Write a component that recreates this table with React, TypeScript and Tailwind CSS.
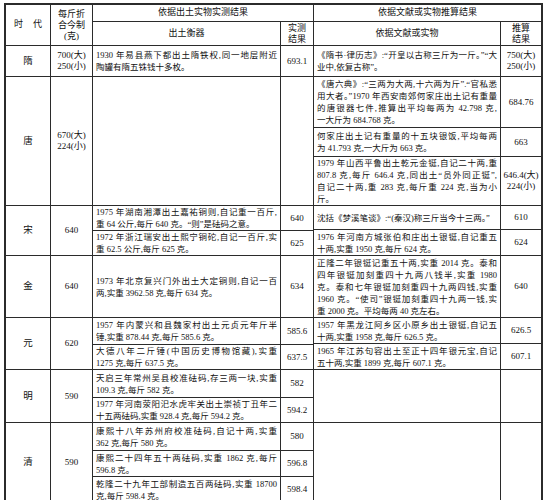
import React from "react";

type Sub = { h?: number; lines: string[]; value: string[] };
type Era = {
  name: string;
  base: string[];
  h: number;
  left: Sub[];
  right: Sub[];
};

const eras: Era[] = [
  {
    name: "隋",
    base: ["700(大)", "250(小)"],
    h: 31,
    left: [
      {
        lines: ["1930 年易县燕下都出土隋铁权,同一地层附近", "陶罐有隋五铢钱十多枚。"],
        value: ["693.1"],
      },
    ],
    right: [
      {
        lines: ["《隋书·律历志》:“开皇以古称三斤为一斤。”“大", "业中,依复古称”。"],
        value: ["750(大)", "250(小)"],
      },
    ],
  },
  {
    name: "唐",
    base: ["670(大)", "224(小)"],
    h: 129,
    left: [{ lines: [], value: [] }],
    right: [
      {
        h: 50,
        lines: [
          "《唐六典》:“三两为大两,十六两为斤”.“官私悉",
          "用大者。”1970 年西安南郊何家庄出土记有重量",
          "的唐银器七件,推算出平均每两为 42.798 克,",
          "一大斤为 684.768 克。",
        ],
        value: ["684.76"],
      },
      {
        h: 29,
        lines: ["何家庄出土记有重量的十五块银饭,平均每两", "为 41.793 克,一大斤为 663 克。"],
        value: ["663"],
      },
      {
        lines: [
          "1979 年山西平鲁出土乾元金铤,自记二十两,重",
          "807.8 克,每斤 646.4 克,同出土“员外同正铤”,",
          "自记二十两,重 283 克,每斤重 224 克,当为小",
          "斤。",
        ],
        value: ["646.4(大)", "224(小)"],
      },
    ],
  },
  {
    name: "宋",
    base: ["640"],
    h: 50,
    left: [
      {
        h: 28,
        lines: ["1975 年湖南湘潭出土嘉祐铜则,自记重一百斤,", "重 64 公斤,每斤 640 克。“则”是砝码之意。"],
        value: ["640"],
      },
      {
        lines: ["1972 年浙江瑞安出土熙宁铜砣,自记一百斤,实", "重 62.5 公斤,每斤 625 克。"],
        value: ["625"],
      },
    ],
    right: [
      {
        h: 23,
        lines: ["沈括《梦溪笔谈》:“(秦汉)称三斤当今十三两。”"],
        value: ["610"],
      },
      {
        lines: ["1976 年河南方城张伯和庄出土银铤,自记重五", "十两,实重 1950 克,每斤 624 克。"],
        value: ["624"],
      },
    ],
  },
  {
    name: "金",
    base: ["640"],
    h: 62,
    left: [
      {
        lines: ["1973 年北京复兴门外出土大定铜则,自记一百", "两,实重 3962.58 克,每斤 634 克。"],
        value: ["634"],
      },
    ],
    right: [
      {
        lines: [
          "正隆二年银铤记重五十两,实重 2014 克。泰和",
          "四年银铤加刻重四十九两八钱半,实重 1980",
          "克。泰和七年银铤加刻重四十九两四钱,实重",
          "1960 克。“使司”银铤加刻重四十九两一钱,实",
          "重 2000 克。平均每两 40 克左右。",
        ],
        value: ["640"],
      },
    ],
  },
  {
    name: "元",
    base: ["620"],
    h: 52,
    left: [
      {
        h: 28,
        lines: ["1957 年内蒙兴和县魏家村出土元贞元年斤半", "锤,实重 878.44 克,每斤 585.6 克。"],
        value: ["585.6"],
      },
      {
        lines: ["大德八年二斤锤(中国历史博物馆藏),实重", "1275 克,每斤 637.5 克。"],
        value: ["637.5"],
      },
    ],
    right: [
      {
        h: 25,
        lines: ["1957 年黑龙江阿乡区小原乡出土银铤,自记五", "十两,实重 1958 克,每斤 626.5 克。"],
        value: ["626.5"],
      },
      {
        lines: ["1965 年江苏句容出土至正十四年银元宝,自记", "五十两,实重 1899 克,每斤 607.1 克。"],
        value: ["607.1"],
      },
    ],
  },
  {
    name: "明",
    base: ["590"],
    h: 53,
    left: [
      {
        h: 28,
        lines: ["天启三年常州吴县校准砝码,存三两一块,实重", "109.3 克,每斤 582 克。"],
        value: ["582"],
      },
      {
        lines: ["1977 年河南荥阳汜水虎牢关出土崇祯丁丑年二", "十五两砝码,实重 928.4 克,每斤 594.2 克。"],
        value: ["594.2"],
      },
    ],
    right: [{ lines: [], value: [] }],
  },
  {
    name: "清",
    base: ["590"],
    h: 80,
    left: [
      {
        h: 27,
        lines: ["康熙十八年苏州府校准砝码,自记十两,实重", "362 克,每斤 580 克。"],
        value: ["580"],
      },
      {
        h: 26,
        lines: ["康熙二十四年五十两砝码,实重 1862 克,每斤", "596.8 克。"],
        value: ["596.8"],
      },
      {
        lines: ["乾隆二十九年工部制造五百两砝码,实重 18700", "克,每斤 598.4 克。"],
        value: ["598.4"],
      },
    ],
    right: [{ lines: [], value: [] }],
  },
];

const Lines = ({ lines }: { lines: string[] }) => (
  <div className="px-[3px] text-[8.5px]">
    {lines.map((line, i) => (
      <div
        key={i}
        className={
          i < lines.length - 1
            ? "whitespace-nowrap leading-[12px] text-justify [text-align-last:justify]"
            : "whitespace-nowrap leading-[12px]"
        }
      >
        {line}
      </div>
    ))}
  </div>
);

const Value = ({ value }: { value: string[] }) => (
  <div className="flex flex-1 flex-col items-center justify-center border-l border-[#2b2b2b] text-[9px] leading-[11px]">
    {value.map((v) => (
      <span key={v} className="whitespace-nowrap">
        {v}
      </span>
    ))}
  </div>
);

const Half = ({ subs, width, textWidth }: { subs: Sub[]; width: string; textWidth: string }) => (
  <div className={`flex flex-col border-l border-[#2b2b2b] ${width}`}>
    {subs.map((s, i) => (
      <div
        key={i}
        className={`flex ${i > 0 ? "border-t border-[#2b2b2b]" : ""} ${s.h ? "" : "flex-1"}`}
        style={s.h ? { height: s.h } : undefined}
      >
        <div className={`flex flex-col justify-center ${textWidth}`}>
          <Lines lines={s.lines} />
        </div>
        <Value value={s.value} />
      </div>
    ))}
  </div>
);

export default function App() {
  return (
    <div
      lang="zh-CN"
      className="h-[500px] w-[544px] overflow-hidden bg-white font-['Liberation_Serif','Noto_Sans_CJK_SC',serif] text-[#111]"
    >
      <div className="ml-[4px] mt-[3px] w-[539px] border-2 border-[#2b2b2b]">
        {/* header */}
        <div className="flex h-[40px] text-[9px]">
          <div className="flex w-[44px] items-center justify-center gap-[10px]">
            <span>时</span>
            <span>代</span>
          </div>
          <div className="flex w-[42px] flex-col items-center justify-center border-l border-[#2b2b2b] leading-[11px]">
            <span>每斤折</span>
            <span>合今制</span>
            <span>(克)</span>
          </div>
          <div className="flex w-[221px] flex-col border-l border-[#2b2b2b]">
            <div className="flex h-[16px] items-center justify-center">依据出土实物实测结果</div>
            <div className="flex flex-1 border-t border-[#2b2b2b]">
              <div className="flex w-[187px] items-center justify-center">出土衡器</div>
              <div className="flex flex-1 flex-col items-center justify-center border-l border-[#2b2b2b] leading-[11px]">
                <span>实测</span>
                <span>结果</span>
              </div>
            </div>
          </div>
          <div className="flex w-[228px] flex-col border-l border-[#2b2b2b]">
            <div className="flex h-[16px] items-center justify-center">依据文献或实物推算结果</div>
            <div className="flex flex-1 border-t border-[#2b2b2b]">
              <div className="flex w-[186px] items-center justify-center">依据文献或实物</div>
              <div className="flex flex-1 flex-col items-center justify-center border-l border-[#2b2b2b] leading-[11px]">
                <span>推算</span>
                <span>结果</span>
              </div>
            </div>
          </div>
        </div>

        {eras.map((era) => (
          <div key={era.name} className="flex border-t border-[#2b2b2b]" style={{ height: era.h }}>
            <div className="flex w-[44px] items-center justify-center text-[9.5px]">
              {era.name}
            </div>
            <div className="flex w-[42px] flex-col items-center justify-center border-l border-[#2b2b2b] text-[9px] leading-[11px]">
              {era.base.map((b) => (
                <span key={b}>{b}</span>
              ))}
            </div>
            <Half subs={era.left} width="w-[221px]" textWidth="w-[187px]" />
            <Half subs={era.right} width="w-[228px]" textWidth="w-[186px]" />
          </div>
        ))}
      </div>
    </div>
  );
}
